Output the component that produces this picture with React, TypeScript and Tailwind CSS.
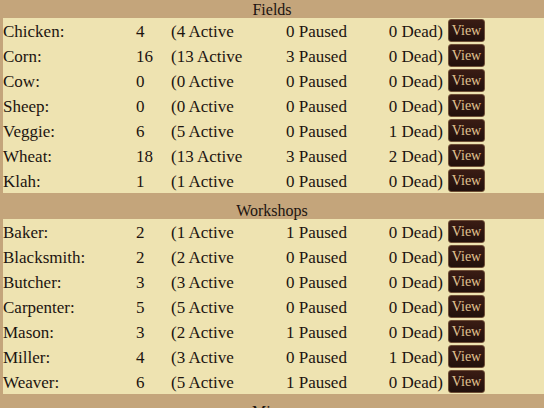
import React from 'react';

type Row = { name: string; total: number; active: number; paused: number; dead: number };

const fields: Row[] = [
    { name: 'Chicken', total: 4, active: 4, paused: 0, dead: 0 },
    { name: 'Corn', total: 16, active: 13, paused: 3, dead: 0 },
    { name: 'Cow', total: 0, active: 0, paused: 0, dead: 0 },
    { name: 'Sheep', total: 0, active: 0, paused: 0, dead: 0 },
    { name: 'Veggie', total: 6, active: 5, paused: 0, dead: 1 },
    { name: 'Wheat', total: 18, active: 13, paused: 3, dead: 2 },
    { name: 'Klah', total: 1, active: 1, paused: 0, dead: 0 },
];

const workshops: Row[] = [
    { name: 'Baker', total: 2, active: 1, paused: 1, dead: 0 },
    { name: 'Blacksmith', total: 2, active: 2, paused: 0, dead: 0 },
    { name: 'Butcher', total: 3, active: 3, paused: 0, dead: 0 },
    { name: 'Carpenter', total: 5, active: 5, paused: 0, dead: 0 },
    { name: 'Mason', total: 3, active: 2, paused: 1, dead: 0 },
    { name: 'Miller', total: 4, active: 3, paused: 0, dead: 1 },
    { name: 'Weaver', total: 6, active: 5, paused: 1, dead: 0 },
];

function SectionHeader({ title }: { title: string }) {
    return (
        <div className="h-[26px] pt-[9px] bg-[#c4a57b] flex items-center justify-center text-[16px] text-[#1c1410] leading-none">
            {title}
        </div>
    );
}

function BuildingRow({ row }: { row: Row }) {
    return (
        <div className="h-[25px] flex items-center text-[17px] text-[#1c1410] leading-none pt-[2px]">
            <div className="w-[133px]">{row.name}:</div>
            <div className="w-[35px]">{row.total}</div>
            <div className="w-[115px]">({row.active} Active</div>
            <div className="w-[90px]">{row.paused} Paused</div>
            <div className="w-[67px] text-right">{row.dead} Dead)</div>
            <button className="ml-[5px] -mt-[2px] h-[23px] w-[37px] rounded-[3px] border border-[#6e4e36] bg-gradient-to-b from-[#3a1c14] to-[#22100c] font-[family-name:'Liberation_Serif',serif] text-[14px] text-[#e0c392] leading-none">
                View
            </button>
        </div>
    );
}

export default function App() {
    return (
        <div className="w-[544px] h-[408px] overflow-hidden bg-[#eee3b1] font-[family-name:'Liberation_Serif',serif]">
            <div className="-mt-[8px]">
                <SectionHeader title="Fields" />
                <div className="border-l-[3px] border-[#c4a57b]">
                    {fields.map(r => <BuildingRow key={r.name} row={r} />)}
                </div>
                <SectionHeader title="Workshops" />
                <div className="border-l-[3px] border-[#c4a57b]">
                    {workshops.map(r => <BuildingRow key={r.name} row={r} />)}
                </div>
                <SectionHeader title="Mines" />
            </div>
        </div>
    );
}
